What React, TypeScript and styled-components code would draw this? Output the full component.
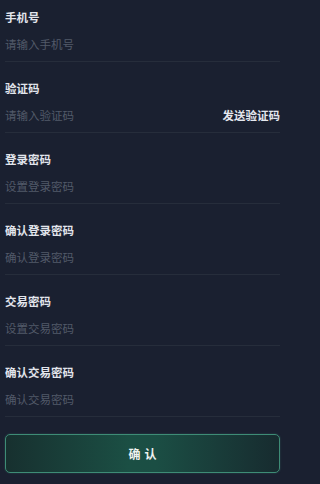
import React from "react";
import styled, { createGlobalStyle } from "styled-components";

const Global = createGlobalStyle`
  html, body { margin: 0; padding: 0; background: #1a2030; }
  body { font-family: "Noto Sans CJK SC", "Noto Sans", sans-serif; }
  * { box-sizing: border-box; }
`;

const Page = styled.div`
  width: 287px;
  height: 484px;
  background: #1a2030;
  padding: 0 7px 0 5px;
  display: flex;
  flex-direction: column;
  overflow: hidden;
`;

const Field = styled.div`
  padding: 18px 0 9px;
  border-bottom: 1px solid #262d3b;
  display: flex;
  flex-direction: column;
  gap: 11px;
  &:first-child { padding-top: 9px; }
`;

const Label = styled.div`
  font-size: 11.5px;
  line-height: 16px;
  font-weight: 700;
  color: #e2e5ec;
`;

const InputRow = styled.div`
  display: flex;
  align-items: center;
  justify-content: space-between;
  height: 16px;
`;

const Input = styled.input`
  flex: 1;
  min-width: 0;
  background: transparent;
  border: none;
  outline: none;
  padding: 0;
  font-family: inherit;
  font-size: 11.5px;
  line-height: 16px;
  color: #e2e5ec;
  &::placeholder { color: #525a69; }
`;

const SendCode = styled.span`
  font-size: 11.5px;
  font-weight: 700;
  color: #e4e7ee;
  white-space: nowrap;
`;

const Submit = styled.button`
  margin-top: 17px;
  height: 39px;
  width: 100%;
  border-radius: 5px;
  border: 1.5px solid #3e8c76;
  background: linear-gradient(90deg, #17302f 0%, #1b4f44 45%, #1b4e44 55%, #172b2f 100%);
  box-shadow: 0 0 2px rgba(80, 170, 140, 0.35);
  color: #eef2f0;
  font-family: inherit;
  font-size: 12px;
  font-weight: 700;
  letter-spacing: 4px;
  padding: 0 0 0 4px;
`;

const fields: { label: string; placeholder: string; send?: boolean }[] = [
  { label: "手机号", placeholder: "请输入手机号" },
  { label: "验证码", placeholder: "请输入验证码", send: true },
  { label: "登录密码", placeholder: "设置登录密码" },
  { label: "确认登录密码", placeholder: "确认登录密码" },
  { label: "交易密码", placeholder: "设置交易密码" },
  { label: "确认交易密码", placeholder: "确认交易密码" },
];

export default function App() {
  return (
    <>
      <Global />
      <Page>
        {fields.map((f) => (
          <Field key={f.label}>
            <Label>{f.label}</Label>
            <InputRow>
              <Input placeholder={f.placeholder} />
              {f.send && <SendCode>发送验证码</SendCode>}
            </InputRow>
          </Field>
        ))}
        <Submit>确认</Submit>
      </Page>
    </>
  );
}
